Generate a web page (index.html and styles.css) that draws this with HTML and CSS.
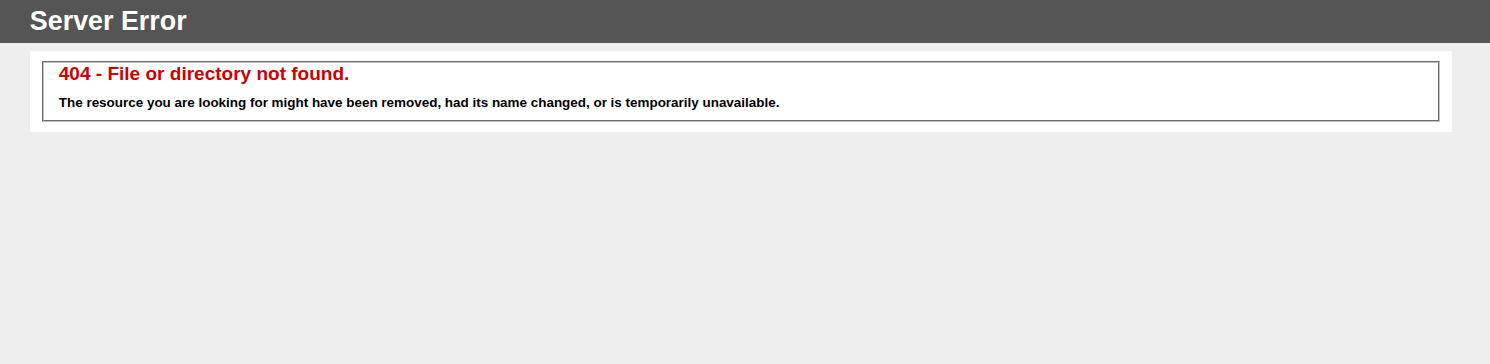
FILE: index.html
```html
<!DOCTYPE html>
<html>
<head>
<meta charset="utf-8">
<title>404 - File or directory not found.</title>
<link rel="stylesheet" href="styles.css">
</head>
<body>
<div class="header"><h1 class="title">Server Error</h1></div>
<div class="content">
 <div class="content-container"><fieldset class="box">
  <h2 class="error">404 - File or directory not found.</h2>
  <h3 class="desc">The resource you are looking for might have been removed, had its name changed, or is temporarily unavailable.</h3>
 </fieldset></div>
</div>
</body>
</html>
```
FILE: styles.css
```css
body{margin:0;font-size:.7em;font-family:"Liberation Sans", Arial, Helvetica, sans-serif;background:#EEEEEE;}
.box{padding:0 15px 10px 15px;margin:0 2px;border:2px groove #c0c0c0;min-width:0;}
.title{font-size:2.4em;margin:0;color:#FFF;font-weight:bold;}
.error{font-size:1.7em;margin:0;color:#CC0000;font-weight:bold;}
.desc{font-size:1.2em;margin:10px 0 0 0;color:#000000;font-weight:bold;}
.header{width:96%;margin:0;padding:6px 2% 6px 2%;font-family:"Liberation Sans", Arial, sans-serif;color:#FFF;background-color:#555555;}
.content{margin:0 0 0 2%;}
.content-container{background:#FFF;width:96%;margin-top:8px;padding:10px;}
```
